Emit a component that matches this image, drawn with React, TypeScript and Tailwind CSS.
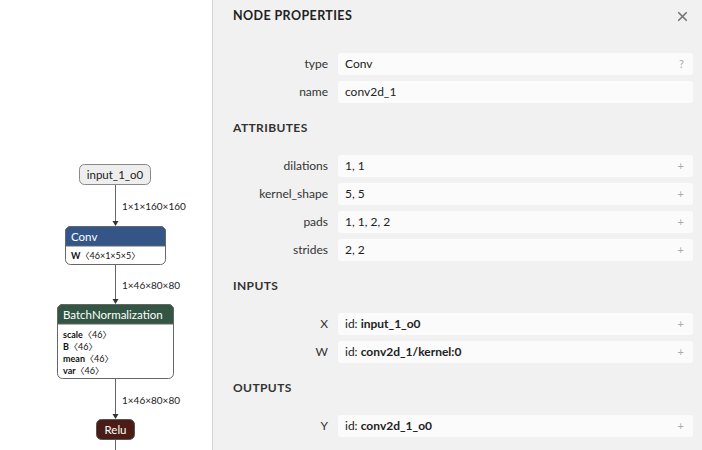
import { X } from "lucide-react";

const font = { fontFamily: "Lato, 'Open Sans', sans-serif" };

type Row = { label: string; value: React.ReactNode; icon?: string };

const props: Row[] = [
  { label: "type", value: "Conv", icon: "?" },
  { label: "name", value: "conv2d_1" },
];

const attributes: Row[] = [
  { label: "dilations", value: "1, 1", icon: "+" },
  { label: "kernel_shape", value: "5, 5", icon: "+" },
  { label: "pads", value: "1, 1, 2, 2", icon: "+" },
  { label: "strides", value: "2, 2", icon: "+" },
];

const inputs: Row[] = [
  { label: "X", value: <>id: <b>input_1_o0</b></>, icon: "+" },
  { label: "W", value: <>id: <b>conv2d_1/kernel:0</b></>, icon: "+" },
];

const outputs: Row[] = [{ label: "Y", value: <>id: <b>conv2d_1_o0</b></>, icon: "+" }];

function Rows({ rows }: { rows: Row[] }) {
  return (
    <div className="flex flex-col gap-[6px]">
      {rows.map((r) => (
        <div key={r.label} className="flex items-center h-[22px]">
          <div className="w-[95px] shrink-0 text-right text-[12px] text-[#333]">{r.label}</div>
          <div className="ml-[10px] flex-1 h-[22px] flex items-center justify-between rounded-[3px] bg-[#fbfbfb] px-[7px] text-[12px] text-[#222]">
            <span>{r.value}</span>
            {r.icon && <span className="text-[11px] text-[#aaa] mr-[2px]">{r.icon}</span>}
          </div>
        </div>
      ))}
    </div>
  );
}

function Heading({ children }: { children: string }) {
  return (
    <div className="pt-[18px] pb-[20px] text-[12px] leading-[14px] font-bold text-[#333] tracking-[0.4px]">
      {children}
    </div>
  );
}

// full-width angle brackets, as netron draws them
const br = "'Noto Sans CJK SC', sans-serif";

function Shape({ x, y, name, shape }: { x: number; y: number; name: string; shape: string }) {
  return (
    <text x={x} y={y} fontSize="9" fill="#111">
      <tspan fontWeight="bold">{name}</tspan>
      <tspan fontFamily={br}>〈</tspan>{shape}<tspan fontFamily={br}>〉</tspan>
    </text>
  );
}

function Graph() {
  const edge = "#666";
  return (
    <svg width="212" height="450" className="block" style={font}>
      {/* edges */}
      <line x1="115.5" y1="184.5" x2="115.5" y2="222" stroke={edge} />
      <polygon points="112.5,221 118.5,221 115.5,226" fill="#333" />
      <text x="122" y="210" fontSize="10" fill="#222">1×1×160×160</text>

      <line x1="115.5" y1="264.5" x2="115.5" y2="300" stroke={edge} />
      <polygon points="112.5,299 118.5,299 115.5,304" fill="#333" />
      <text x="122" y="289" fontSize="10" fill="#222">1×46×80×80</text>

      <line x1="115.5" y1="378.5" x2="115.5" y2="415" stroke={edge} />
      <polygon points="112.5,414 118.5,414 115.5,419" fill="#333" />
      <text x="122" y="404" fontSize="10" fill="#222">1×46×80×80</text>

      <line x1="115.5" y1="439.5" x2="115.5" y2="450" stroke={edge} />

      {/* input */}
      <rect x="79.5" y="164.5" width="71" height="20" rx="5" fill="#eeeeee" stroke="#888" />
      <text x="115" y="178.5" fontSize="11.5" textAnchor="middle" fill="#222">input_1_o0</text>

      {/* Conv */}
      <rect x="65.5" y="226.5" width="100" height="38" rx="5" fill="#fff" stroke="#666" />
      <path d="M65.5,246 V231.5 a5,5 0 0 1 5,-5 H160.5 a5,5 0 0 1 5,5 V246 Z" fill="#335588" stroke="#666" />
      <text x="71" y="240.5" fontSize="11.5" fill="#fff">Conv</text>
      <Shape x={71} y={258.5} name="W" shape="46×1×5×5" />

      {/* BatchNormalization */}
      <rect x="57.5" y="304.5" width="116" height="74" rx="5" fill="#fff" stroke="#666" />
      <path d="M57.5,324 V309.5 a5,5 0 0 1 5,-5 H168.5 a5,5 0 0 1 5,5 V324 Z" fill="#335544" stroke="#666" />
      <text x="63" y="318.5" fontSize="11.5" fill="#fff">BatchNormalization</text>
      <Shape x={63} y={337.5} name="scale" shape="46" />
      <Shape x={63} y={349.5} name="B" shape="46" />
      <Shape x={63} y={361.5} name="mean" shape="46" />
      <Shape x={63} y={373.5} name="var" shape="46" />

      {/* Relu */}
      <rect x="96.5" y="419.5" width="38" height="20" rx="5" fill="#4b1b16" stroke="#555" />
      <text x="115.5" y="433.5" fontSize="11.5" textAnchor="middle" fill="#fff">Relu</text>
    </svg>
  );
}

export default function App() {
  return (
    <div className="flex w-[702px] h-[450px] overflow-hidden bg-white" style={font}>
      <div className="w-[212px] shrink-0">
        <Graph />
      </div>
      <div className="flex-1 bg-[#f1f1f1] border-l border-[#d4d4d4] pl-[20px] pr-[9px] pt-[9px]">
        <div className="flex items-center justify-between h-[14px]">
          <div className="text-[12.5px] leading-[14px] font-bold text-[#222] tracking-[0.4px]">NODE PROPERTIES</div>
          <X size={15} strokeWidth={2.75} className="text-[#777] mr-[3px]" />
        </div>
        <div className="h-[30px]" />
        <Rows rows={props} />
        <Heading>ATTRIBUTES</Heading>
        <Rows rows={attributes} />
        <Heading>INPUTS</Heading>
        <Rows rows={inputs} />
        <Heading>OUTPUTS</Heading>
        <Rows rows={outputs} />
      </div>
    </div>
  );
}
